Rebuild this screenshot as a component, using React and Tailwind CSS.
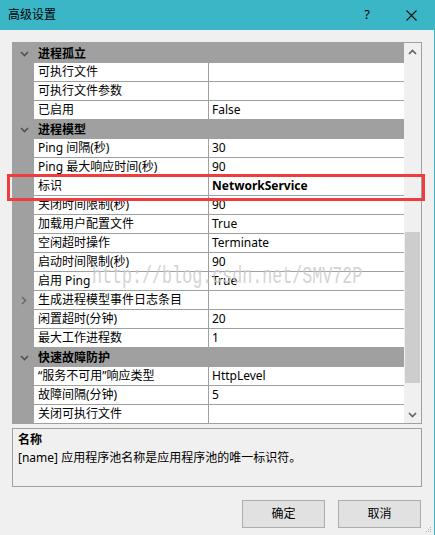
import React from "react";

const font = { fontFamily: '"Noto Sans", "Noto Sans CJK SC", sans-serif' };

const sections = [
  {
    title: "进程孤立",
    rows: [
      { name: "可执行文件", value: "" },
      { name: "可执行文件参数", value: "" },
      { name: "已启用", value: "False" },
    ],
  },
  {
    title: "进程模型",
    rows: [
      { name: "Ping 间隔(秒)", value: "30" },
      { name: "Ping 最大响应时间(秒)", value: "90" },
      { name: "标识", value: "NetworkService", bold: true },
      { name: "关闭时间限制(秒)", value: "90" },
      { name: "加载用户配置文件", value: "True" },
      { name: "空闲超时操作", value: "Terminate" },
      { name: "启动时间限制(秒)", value: "90" },
      { name: "启用 Ping", value: "True" },
      { name: "生成进程模型事件日志条目", value: "", expandable: true },
      { name: "闲置超时(分钟)", value: "20" },
      { name: "最大工作进程数", value: "1" },
    ],
  },
  {
    title: "快速故障防护",
    rows: [
      { name: "“服务不可用”响应类型", value: "HttpLevel" },
      { name: "故障间隔(分钟)", value: "5" },
      { name: "关闭可执行文件", value: "" },
    ],
  },
];

const ChevronDown = ({ className }) => (
  <svg width="9" height="6" viewBox="0 0 9 6" className={className}>
    <path d="M1 1 L4.5 4.5 L8 1" fill="none" stroke="currentColor" strokeWidth="1.6" />
  </svg>
);

const ChevronUp = ({ className }) => (
  <svg width="9" height="6" viewBox="0 0 9 6" className={className}>
    <path d="M1 5 L4.5 1.5 L8 5" fill="none" stroke="currentColor" strokeWidth="1.6" />
  </svg>
);

const ChevronRight = ({ className }) => (
  <svg width="6" height="9" viewBox="0 0 6 9" className={className}>
    <path d="M1 1 L4.5 4.5 L1 8" fill="none" stroke="currentColor" strokeWidth="1.6" />
  </svg>
);

const CategoryRow = ({ title }) => (
  <div className="flex h-[19px] items-center bg-[#a0a0a0]">
    <div className="flex w-[21px] justify-center pl-[1px]">
      <ChevronDown className="text-[#505050]" />
    </div>
    <span className="pl-1 text-[12px] font-bold leading-[18px] text-black">{title}</span>
  </div>
);

const PropRow = ({ row }) => (
  <div className="flex h-[19px] bg-[#a0a0a0]">
    <div className="flex w-[21px] items-center justify-center pl-[1px]">
      {row.expandable && <ChevronRight className="text-[#6a6a6a]" />}
    </div>
    <div className="mb-px flex w-[174px] items-center bg-white pl-1 text-[12px] leading-[18px] text-black whitespace-nowrap">
      {row.name}
    </div>
    <div
      className={`mb-px ml-px flex w-[195px] items-center bg-white pl-[3px] text-[12px] leading-[18px] text-black ${
        row.bold ? "font-bold" : ""
      }`}
    >
      {row.value}
    </div>
  </div>
);

export default function App() {
  return (
    <div
      className="relative flex h-[535px] w-[435px] flex-col overflow-hidden border-r border-[#3bb6c7] bg-[#f0f0f0]"
      style={font}
    >
      {/* title bar */}
      <div className="flex h-[30px] shrink-0 items-center bg-[#3bb6c7] pl-2 text-[12px] text-black">
        <span className="flex-1">高级设置</span>
        <span className="mr-[36px] text-[13px]">?</span>
        <svg width="11" height="11" viewBox="0 0 11 11" className="mr-[17px]">
          <path d="M0.5 0.5 L10.5 10.5 M10.5 0.5 L0.5 10.5" stroke="#111" strokeWidth="1.1" />
        </svg>
      </div>

      <div className="flex flex-1 flex-col px-3 pt-3">
        {/* property grid */}
        <div className="flex h-[382px] border border-[#a0a0a0]">
          <div className="w-[391px] overflow-hidden bg-[#a0a0a0] pt-px">
            {sections.map((s) => (
              <div key={s.title}>
                <CategoryRow title={s.title} />
                {s.rows.map((r) => (
                  <PropRow key={r.name} row={r} />
                ))}
              </div>
            ))}
          </div>
          <div className="flex w-[17px] flex-col bg-[#f0f0f0]">
            <div className="flex h-[17px] items-center justify-center">
              <ChevronUp className="text-[#606060]" />
            </div>
            <div className="mt-[172px] ml-px h-[151px] w-[15px] bg-[#cdcdcd]" />
            <div className="flex-1" />
            <div className="flex h-[17px] items-center justify-center">
              <ChevronDown className="text-[#606060]" />
            </div>
          </div>
        </div>

        {/* description */}
        <div className="mt-1 h-[59px] border border-[#a0a0a0] px-[5px] pt-[2px] text-[12px] text-black">
          <div className="font-bold leading-[18px]">名称</div>
          <div className="leading-[18px]">[name] 应用程序池名称是应用程序池的唯一标识符。</div>
        </div>

        {/* buttons */}
        <div className="mt-[13px] mr-px flex justify-end gap-[13px]">
          <button className="h-[28px] w-[83px] border border-[#adadad] bg-[#e1e1e1] text-[12px] text-black">
            确定
          </button>
          <button className="h-[28px] w-[83px] border border-[#adadad] bg-[#e1e1e1] text-[12px] text-black">
            取消
          </button>
        </div>
      </div>

      {/* highlight annotation */}
      <div className="pointer-events-none absolute left-[7px] top-[174px] h-[27px] w-[418px] border-[3px] border-[#f03c3c]" />

      {/* watermark */}
      <div
        className="pointer-events-none absolute left-[92px] top-[266px] origin-top scale-y-[1.4] text-[16.7px] leading-[16px] text-[#c8c8c8]/80 whitespace-nowrap"
        style={{ fontFamily: '"Liberation Mono", monospace' }}
      >
        http://blog.csdn.net/SMV72P
      </div>

      {/* resize grip */}
      <svg width="6" height="6" viewBox="0 0 6 6" className="absolute bottom-[2px] right-[2px]">
        <rect x="4" y="0" width="1" height="1" fill="#b0b0b0" />
        <rect x="2" y="2" width="1" height="1" fill="#b0b0b0" />
        <rect x="4" y="2" width="1" height="1" fill="#b0b0b0" />
        <rect x="0" y="4" width="1" height="1" fill="#b0b0b0" />
        <rect x="2" y="4" width="1" height="1" fill="#b0b0b0" />
        <rect x="4" y="4" width="1" height="1" fill="#b0b0b0" />
      </svg>
    </div>
  );
}
